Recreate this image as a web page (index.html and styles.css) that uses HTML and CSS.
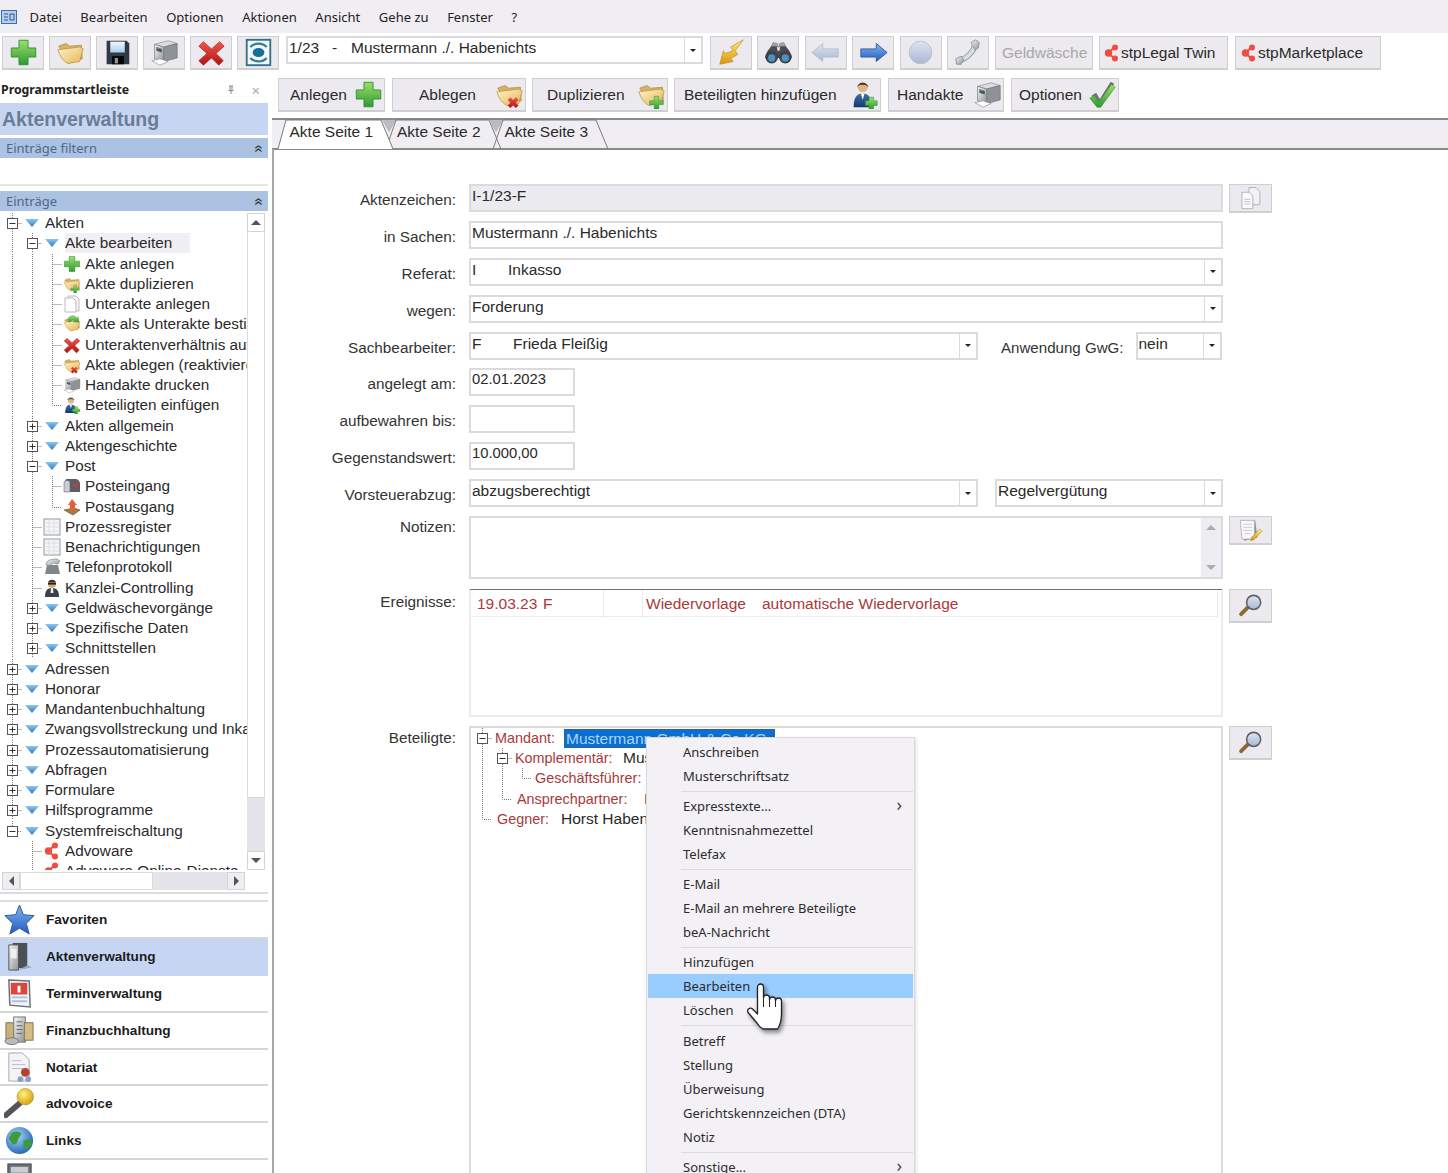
FILE: index.html
```html
<!DOCTYPE html>
<html lang="de">
<head>
<meta charset="utf-8">
<title>Aktenverwaltung</title>
<link rel="stylesheet" href="styles.css">
</head>
<body>
<svg class="defs" aria-hidden="true">
<defs>
<linearGradient id="gGreen" x1="0" y1="0" x2="0" y2="1"><stop offset="0" stop-color="#9be06a"/><stop offset="1" stop-color="#2f9a32"/></linearGradient>
<linearGradient id="gFolder" x1="0" y1="0" x2="1" y2="1"><stop offset="0" stop-color="#fff3c8"/><stop offset="1" stop-color="#e6b558"/></linearGradient>
<linearGradient id="gRed" x1="0" y1="0" x2="0" y2="1"><stop offset="0" stop-color="#f2554a"/><stop offset="1" stop-color="#b01414"/></linearGradient>
<linearGradient id="gBlue" x1="0" y1="0" x2="0" y2="1"><stop offset="0" stop-color="#7fb6f2"/><stop offset="1" stop-color="#2559c0"/></linearGradient>
<linearGradient id="gPale" x1="0" y1="0" x2="0" y2="1"><stop offset="0" stop-color="#dfe5f0"/><stop offset="1" stop-color="#a9b7d2"/></linearGradient>
<linearGradient id="gGrey" x1="0" y1="0" x2="1" y2="1"><stop offset="0" stop-color="#f5f5f5"/><stop offset="1" stop-color="#8f9296"/></linearGradient>
<linearGradient id="gGold" x1="0" y1="0" x2="0" y2="1"><stop offset="0" stop-color="#fff06a"/><stop offset="1" stop-color="#dc9212"/></linearGradient>
<linearGradient id="gTri" x1="0" y1="0" x2="0" y2="1"><stop offset="0" stop-color="#8fc6ee"/><stop offset="1" stop-color="#2b7bc6"/></linearGradient>
<linearGradient id="gSuit" x1="0" y1="0" x2="0" y2="1"><stop offset="0" stop-color="#3f6fa8"/><stop offset="1" stop-color="#123a70"/></linearGradient>
<linearGradient id="gWin" x1="0" y1="0" x2="0" y2="1"><stop offset="0" stop-color="#f0f8ff"/><stop offset="1" stop-color="#a8cdea"/></linearGradient>
<radialGradient id="gGlobe" cx=".4" cy=".35" r=".7"><stop offset="0" stop-color="#a6d8f8"/><stop offset="1" stop-color="#1f62b0"/></radialGradient>
<radialGradient id="gMic" cx=".4" cy=".35" r=".7"><stop offset="0" stop-color="#fff27a"/><stop offset="1" stop-color="#d49a10"/></radialGradient>

<symbol id="plus" viewBox="0 0 32 32"><path d="M11 2.500h10v8.500h8.500v10H21v8.500H11V21H2.500V11H11z" fill="url(#gGreen)" stroke="#2f8f34"/></symbol>
<symbol id="folder" viewBox="0 0 32 32"><path d="M3 9l8-3 4 3 13-1 1 15-15 5z" fill="#d9b062" stroke="#a98a48" stroke-width=".8"/><path d="M2 13l24-3 4 2-4 14-13 2q-7-3-11-15z" fill="url(#gFolder)" stroke="#b8923e" stroke-width=".8"/></symbol>
<symbol id="folderx" viewBox="0 0 32 32"><use href="#folder"/><path d="M17 19l3 3 3-3 3 3-3 3 3 3-3 3-3-3-3 3-3-3 3-3-3-3z" fill="url(#gRed)"/></symbol>
<symbol id="folderp" viewBox="0 0 32 32"><use href="#folder"/><path d="M19 18h5v5h5v4h-5v5h-5v-5h-5v-4h5z" fill="url(#gGreen)" stroke="#2f8f34" stroke-width=".6"/></symbol>
<symbol id="folderg" viewBox="0 0 32 32"><use href="#folder"/><path d="M10 12a8 7 0 0 1 14-7l3-2 1 10-10-1 3-2a4 4 0 0 0-7 2z" fill="url(#gGreen)" stroke="#2f8f34" stroke-width=".6"/></symbol>
<symbol id="save" viewBox="0 0 32 32"><path d="M4 3h22l3 3v23H4z" fill="#2e3a46"/><rect x="8" y="4" width="16" height="12" fill="url(#gWin)"/><rect x="10" y="20" width="13" height="9" fill="#050505"/><rect x="13" y="22" width="3.500" height="6" fill="#8a98a6"/></symbol>
<symbol id="print" viewBox="0 0 32 32"><path d="M5 7l15-4 10 3-15 4z" fill="#dadcde" stroke="#84888c" stroke-width=".7"/><path d="M15 10l15-4v16l-15 4z" fill="#8f9398" stroke="#6b6f74" stroke-width=".7"/><path d="M5 7l10 3v16L5 23z" fill="url(#gGrey)" stroke="#6b6f74" stroke-width=".7"/><path d="M7 10l6 2v4l-6-2z" fill="#4f555a"/><path d="M8 11l2 .7" stroke="#6ec26e" stroke-width="1.200"/><path d="M2 25l9-2 9 3-9 4z" fill="#fff" stroke="#888" stroke-width=".7"/></symbol>
<symbol id="xx" viewBox="0 0 32 32"><path d="M7 4l9 8 9-8 5 5-9 8 8 8-5 5-8-8-9 8-5-5 9-8-9-8z" fill="url(#gRed)" stroke="#a02020" stroke-width=".7" stroke-linejoin="round"/></symbol>
<symbol id="logo" viewBox="0 0 32 32"><rect x="3" y="2" width="26" height="28" fill="#f4f7f8" stroke="#2f6f88" stroke-width="2"/><ellipse cx="16" cy="16" rx="6.500" ry="5" fill="#13709a"/><path d="M7 10a11 9 0 0 1 18 0" fill="none" stroke="#2f7f9c" stroke-width="2.500"/><path d="M7 22a11 9 0 0 0 18 0" fill="none" stroke="#2f7f9c" stroke-width="2.500"/></symbol>
<symbol id="flash" viewBox="0 0 32 32"><path d="M29 2L15 10l3 4-9 3-2-3-4 15 15-3-3-3 8-5-3-4z" fill="url(#gGold)" stroke="#b88a20" stroke-width=".7"/></symbol>
<symbol id="bino" viewBox="0 0 32 32"><path d="M8 9l2-4 5 1v4h2V6l5-1 2 4z" fill="#a6a8aa" stroke="#666" stroke-width=".5"/><path d="M4 14l4-5h6l1 5h2l1-5h6l4 5 3 8H1z" fill="#4a4d52"/><circle cx="8.500" cy="21" r="7" fill="#3f4348"/><circle cx="23.500" cy="21" r="7" fill="#3f4348"/><circle cx="8.500" cy="22" r="4" fill="#4b93c6"/><circle cx="23.500" cy="22" r="4" fill="#4b93c6"/></symbol>
<symbol id="al" viewBox="0 0 32 32"><path d="M1 16L13 6v6h17v9H13v5z" fill="url(#gPale)" stroke="#b4bfd0"/></symbol>
<symbol id="ar" viewBox="0 0 32 32"><path d="M31 16L19 6v6H2v9h17v5z" fill="url(#gBlue)" stroke="#3a5d98"/></symbol>
<symbol id="circ" viewBox="0 0 32 32"><circle cx="16" cy="16" r="12.500" fill="url(#gPale)" stroke="#b6bfd0"/></symbol>
<symbol id="phone" viewBox="0 0 32 32"><path d="M24 8C23 15 15 23 7 25" fill="none" stroke="#8d969e" stroke-width="6"/><path d="M24 8C23 15 15 23 7 25" fill="none" stroke="#d8dfe4" stroke-width="4"/><path d="M20 5l5-3 4 3-1 6-4 2z" fill="url(#gGrey)" stroke="#8d969e"/><path d="M3 23l6-3 3 4-3 5-5 0z" fill="url(#gGrey)" stroke="#8d969e"/></symbol>
<symbol id="stp" viewBox="0 0 16 18"><path d="M4 9L11 3M4 9l7 6" stroke="#ee4e42" stroke-width="2"/><circle cx="4.500" cy="9" r="3.700" fill="#ee4e42"/><circle cx="11" cy="3.500" r="3" fill="#ee4e42"/><circle cx="11" cy="14.500" r="3" fill="#ee4e42"/></symbol>
<symbol id="person" viewBox="0 0 32 32"><circle cx="14" cy="8" r="5.500" fill="#e0b48a"/><path d="M8.500 7a6 6 0 0 1 11 0l-2-2h-7z" fill="#4a3a2a" stroke="#4a3a2a"/><path d="M4 30c0-10 3-15 10-15s10 5 10 15z" fill="url(#gSuit)"/><path d="M12 15h4l-2 7z" fill="#fff"/></symbol>
<symbol id="personp" viewBox="0 0 32 32"><use href="#person"/><path d="M21 19h5v4h4v5h-4v4h-5v-4h-4v-5h4z" fill="url(#gGreen)" stroke="#2f8f34" stroke-width=".6"/></symbol>
<symbol id="check" viewBox="0 0 32 32"><path d="M4 17l5-3 4 7L25 2l4 2-15 24h-4z" fill="#6d7478"/><path d="M2 20l5-3 5 7L26 5l4 3-16 22h-4z" fill="url(#gGreen)" stroke="#2f8f34" stroke-width=".6"/></symbol>
<symbol id="copy" viewBox="0 0 32 32"><path d="M14 2h9l5 5v17H14z" fill="#f2f2f4" stroke="#9fa3a8"/><path d="M5 8h9l5 5v16H5z" fill="#fbfbfc" stroke="#9fa3a8"/><path d="M8 17h8M8 20h8M8 23h8" stroke="#b4b8bc"/></symbol>
<symbol id="note" viewBox="0 0 32 32"><path d="M4 5l18-2 3 22-17 4z" fill="#8a929a"/><path d="M3 3h18v24H5z" fill="#f7f7f9" stroke="#a6abb0"/><path d="M7 8h11M7 12h11M7 16h11M8 20h8" stroke="#d6b8c0"/><path d="M28 14l3 3-11 11-4 1 1-4z" fill="url(#gGold)" stroke="#a98a28" stroke-width=".6"/></symbol>
<symbol id="lens" viewBox="0 0 32 32"><path d="M13 18L4 27" stroke="#8a6a30" stroke-width="5" stroke-linecap="round"/><circle cx="20" cy="12" r="9" fill="url(#gPale)" stroke="#5b6268" stroke-width="2"/></symbol>
<symbol id="tri" viewBox="0 0 20 18"><path d="M3 5h14L10 13z" fill="url(#gTri)"/></symbol>
<symbol id="doc" viewBox="0 0 18 18"><path d="M5 1h8l3 3v12H5z" fill="#f7f7f9" stroke="#bbb"/><path d="M2 3h8l3 3v11H2z" fill="#fff" stroke="#bbb"/></symbol>
<symbol id="mail" viewBox="0 0 18 18"><path d="M4 2h8c3 0 5 2 5 5v8H2V5c0-2 1-3 2-3z" fill="#5b6068"/><path d="M1 5c0-2 6-2 6 0v10H1z" fill="#c9ced4" stroke="#555" stroke-width=".5"/><path d="M8 9l7-3v4z" fill="#d83a30"/></symbol>
<symbol id="outb" viewBox="0 0 18 18"><path d="M1 12l10-2 6 2-7 5z" fill="#a87a48" stroke="#6a4a28" stroke-width=".6"/><path d="M9 1l5 6-2 0 0 5-5 0 0-5-2 0z" fill="#e2603a"/></symbol>
<symbol id="grid" viewBox="0 0 18 18"><rect x="1" y="1" width="16" height="16" fill="#f3f4f8" stroke="#a4a8ae" stroke-width="1.200"/><path d="M1 5h16M1 9h16M1 13h16M6 1v16M11 1v16" stroke="#d6d9e2" stroke-width=".7"/></symbol>
<symbol id="tel" viewBox="0 0 18 18"><path d="M2 16l2-9h11l2 9z" fill="#7f878c"/><path d="M3 7c0-4 3-6 11-6l3 2-2 3-5-1-3 3z" fill="url(#gGrey)" stroke="#666" stroke-width=".5"/></symbol>
<symbol id="boss" viewBox="0 0 18 18"><circle cx="9" cy="5" r="4" fill="#d8a878"/><path d="M5 3.500a4.200 4 0 0 1 8 0z" fill="#3a3026"/><rect x="5" y="4" width="8" height="1.600" fill="#222"/><path d="M2 18c0-6 2-9 7-9s7 3 7 9z" fill="#3c4046"/><path d="M8 9h2l.5 5h-3z" fill="#e8e8e8"/></symbol>
<symbol id="tg" viewBox="0 0 20 20.25"><path d="M10.500 0v20.250" class="dots"/></symbol>
<symbol id="te" viewBox="0 0 20 20.25"><path d="M10.500 0v20.250M10.500 10.500H20" class="dots"/></symbol>
<symbol id="tl" viewBox="0 0 20 20.25"><path d="M10.500 0v10.500H20" class="dots"/></symbol>
<symbol id="tp" viewBox="0 0 20 20.25"><path d="M10.500 0v20.250M10.500 10.500H20" class="dots"/><rect x="5.500" y="5.500" width="10" height="10" fill="#fff" stroke="#555"/><path d="M7.500 10.500h6M10.500 7.500v6" stroke="#333"/></symbol>
<symbol id="tm" viewBox="0 0 20 20.25"><path d="M10.500 0v20.250M10.500 10.500H20" class="dots"/><rect x="5.500" y="5.500" width="10" height="10" fill="#fff" stroke="#555"/><path d="M7.500 10.500h6" stroke="#333"/></symbol>
<symbol id="tz" viewBox="0 0 20 20.25"><path d="M10.500 0v10.500H20" class="dots"/><rect x="5.500" y="5.500" width="10" height="10" fill="#fff" stroke="#555"/><path d="M7.500 10.500h6" stroke="#333"/></symbol>
<symbol id="star" viewBox="0 0 32 32"><path d="M16 1l4 10 11 1-8 8 3 11-10-6-10 6 3-11-8-8 11-1z" fill="url(#gBlue)" stroke="#2a5c96"/></symbol>
<symbol id="binder" viewBox="0 0 32 32"><path d="M9 2h15v26H9z" fill="#4a5058"/><path d="M5 4h10v26H5z" fill="url(#gGrey)" stroke="#555"/><rect x="7" y="8" width="6" height="10" fill="#f0f0f0"/><path d="M15 30l14-3-5-2z" fill="#9aa4b4"/></symbol>
<symbol id="cal" viewBox="0 0 32 32"><path d="M5 2l21 1 1 27-21-2z" fill="#f4f4f6" stroke="#6d7076" stroke-width="1.500"/><rect x="7" y="5" width="17" height="12" fill="#d9483e"/><path d="M14 8h3v7h-3z" fill="#fff"/><path d="M8 20h16M8 24h16" stroke="#a8c0e4" stroke-width="2"/></symbol>
<symbol id="bldg" viewBox="0 0 32 32"><rect x="2" y="8" width="9" height="18" fill="#c9b27a" stroke="#85744a"/><rect x="10" y="2" width="12" height="26" fill="url(#gGrey)" stroke="#777"/><rect x="21" y="8" width="9" height="18" fill="#d3bd84" stroke="#85744a"/><path d="M13 7h6M13 11h6M13 15h6M13 19h6" stroke="#666"/><ellipse cx="8" cy="27" rx="7" ry="3.500" fill="#bbb" stroke="#777"/></symbol>
<symbol id="seal" viewBox="0 0 32 32"><path d="M5 1h14l7 7v22H5z" fill="#f4f4f6" stroke="#a4a8ae"/><path d="M8 9h10M8 13h14M8 17h12" stroke="#b8bcc2"/><circle cx="22" cy="21" r="4.500" fill="#b8402e"/><circle cx="17" cy="28" r="3" fill="#8aa0c8"/><circle cx="25" cy="28" r="3" fill="#8aa0c8"/></symbol>
<symbol id="mic" viewBox="0 0 32 32"><path d="M16 16L2 28" stroke="#52565c" stroke-width="6" stroke-linecap="round"/><circle cx="22" cy="9" r="8.500" fill="url(#gMic)" stroke="#b08a18" stroke-width=".6"/></symbol>
<symbol id="globe" viewBox="0 0 32 32"><circle cx="16" cy="16" r="14" fill="url(#gGlobe)"/><path d="M8 8c4-2 8-2 10 1l-3 5-2 5-4 1-4-6zM20 16l7-2 2 6-6 6-3-4z" fill="#3f9a3e"/></symbol>
<symbol id="tool" viewBox="0 0 32 32"><rect x="4" y="2" width="24" height="26" fill="#6d7076" stroke="#444"/><rect x="7" y="5" width="18" height="6" fill="#c9ced4"/></symbol>
</defs>
</svg>

<div class="menubar">
  <svg class="appicon" viewBox="0 0 16 16"><rect x=".5" y="1.500" width="15" height="13" fill="#b8cdea" stroke="#3a6fb4"/><path d="M3 5h4M3 8h4M3 11h4M9 5h4v6H9z" stroke="#2a5a9a" fill="none"/></svg>
  <span>Datei</span><span>Bearbeiten</span><span>Optionen</span><span>Aktionen</span><span>Ansicht</span><span>Gehe zu</span><span>Fenster</span><span>?</span>
</div>

<div class="toolbar">
  <div class="tgroup">
    <button class="tb"><svg><use href="#plus"/></svg></button>
    <button class="tb"><svg><use href="#folder"/></svg></button>
    <button class="tb"><svg><use href="#save"/></svg></button>
    <button class="tb"><svg><use href="#print"/></svg></button>
    <button class="tb"><svg><use href="#xx"/></svg></button>
    <button class="tb"><svg><use href="#logo"/></svg></button>
  </div>
  <div class="f combo topcombo"><span class="v"><span class="aznr">1/23&nbsp;&nbsp; -</span>Mustermann ./. Habenichts</span><span class="arr"></span></div>
  <div class="tgroup two">
    <button class="tb"><svg><use href="#flash"/></svg></button>
    <button class="tb"><svg><use href="#bino"/></svg></button>
    <button class="tb"><svg><use href="#al"/></svg></button>
    <button class="tb"><svg><use href="#ar"/></svg></button>
    <button class="tb"><svg><use href="#circ"/></svg></button>
    <button class="tb"><svg><use href="#phone"/></svg></button>
  </div>
  <button class="tb tx geld">Geldwäsche</button>
  <button class="tb tx twin"><svg class="s"><use href="#stp"/></svg>stpLegal Twin</button>
  <button class="tb tx market"><svg class="s"><use href="#stp"/></svg>stpMarketplace</button>
</div>

<div class="workspace">
  <aside class="sidebar">
    <div class="sb-head"><b>Programmstartleiste</b><svg class="pin" viewBox="0 0 10 10"><path d="M3 1h4M4 1v4M6 1v4M2.500 5.500h5M5 6v3" stroke="#888" fill="none"/></svg><span class="close">×</span></div>
    <div class="sb-title">Aktenverwaltung</div>
    <div class="sb-sec">Einträge filtern<span class="chev">«</span></div>
    <div class="sb-input"></div>
    <div class="sb-sec sec2">Einträge<span class="chev">«</span></div>
    <div class="treewrap">
      <div class="tree">
        <div class="tr"><svg class="t"><use href="#tm"/></svg><svg class="i"><use href="#tri"/></svg><span>Akten</span></div>
        <div class="tr"><svg class="t"><use href="#tg"/></svg><svg class="t"><use href="#tm"/></svg><svg class="i"><use href="#tri"/></svg><span class="hl">Akte bearbeiten</span></div>
        <div class="tr"><svg class="t"><use href="#tg"/></svg><svg class="t"><use href="#tg"/></svg><svg class="t"><use href="#te"/></svg><svg class="i"><use href="#plus"/></svg><span>Akte anlegen</span></div>
        <div class="tr"><svg class="t"><use href="#tg"/></svg><svg class="t"><use href="#tg"/></svg><svg class="t"><use href="#te"/></svg><svg class="i"><use href="#folderp"/></svg><span>Akte duplizieren</span></div>
        <div class="tr"><svg class="t"><use href="#tg"/></svg><svg class="t"><use href="#tg"/></svg><svg class="t"><use href="#te"/></svg><svg class="i"><use href="#doc"/></svg><span>Unterakte anlegen</span></div>
        <div class="tr"><svg class="t"><use href="#tg"/></svg><svg class="t"><use href="#tg"/></svg><svg class="t"><use href="#te"/></svg><svg class="i"><use href="#folderg"/></svg><span>Akte als Unterakte bestimmen</span></div>
        <div class="tr"><svg class="t"><use href="#tg"/></svg><svg class="t"><use href="#tg"/></svg><svg class="t"><use href="#te"/></svg><svg class="i"><use href="#xx"/></svg><span>Unteraktenverhältnis aufheben</span></div>
        <div class="tr"><svg class="t"><use href="#tg"/></svg><svg class="t"><use href="#tg"/></svg><svg class="t"><use href="#te"/></svg><svg class="i"><use href="#folderx"/></svg><span>Akte ablegen (reaktivieren)</span></div>
        <div class="tr"><svg class="t"><use href="#tg"/></svg><svg class="t"><use href="#tg"/></svg><svg class="t"><use href="#te"/></svg><svg class="i"><use href="#print"/></svg><span>Handakte drucken</span></div>
        <div class="tr"><svg class="t"><use href="#tg"/></svg><svg class="t"><use href="#tg"/></svg><svg class="t"><use href="#tl"/></svg><svg class="i"><use href="#personp"/></svg><span>Beteiligten einfügen</span></div>
        <div class="tr"><svg class="t"><use href="#tg"/></svg><svg class="t"><use href="#tp"/></svg><svg class="i"><use href="#tri"/></svg><span>Akten allgemein</span></div>
        <div class="tr"><svg class="t"><use href="#tg"/></svg><svg class="t"><use href="#tp"/></svg><svg class="i"><use href="#tri"/></svg><span>Aktengeschichte</span></div>
        <div class="tr"><svg class="t"><use href="#tg"/></svg><svg class="t"><use href="#tm"/></svg><svg class="i"><use href="#tri"/></svg><span>Post</span></div>
        <div class="tr"><svg class="t"><use href="#tg"/></svg><svg class="t"><use href="#tg"/></svg><svg class="t"><use href="#te"/></svg><svg class="i"><use href="#mail"/></svg><span>Posteingang</span></div>
        <div class="tr"><svg class="t"><use href="#tg"/></svg><svg class="t"><use href="#tg"/></svg><svg class="t"><use href="#tl"/></svg><svg class="i"><use href="#outb"/></svg><span>Postausgang</span></div>
        <div class="tr"><svg class="t"><use href="#tg"/></svg><svg class="t"><use href="#te"/></svg><svg class="i"><use href="#grid"/></svg><span>Prozessregister</span></div>
        <div class="tr"><svg class="t"><use href="#tg"/></svg><svg class="t"><use href="#te"/></svg><svg class="i"><use href="#grid"/></svg><span>Benachrichtigungen</span></div>
        <div class="tr"><svg class="t"><use href="#tg"/></svg><svg class="t"><use href="#te"/></svg><svg class="i"><use href="#tel"/></svg><span>Telefonprotokoll</span></div>
        <div class="tr"><svg class="t"><use href="#tg"/></svg><svg class="t"><use href="#te"/></svg><svg class="i"><use href="#boss"/></svg><span>Kanzlei-Controlling</span></div>
        <div class="tr"><svg class="t"><use href="#tg"/></svg><svg class="t"><use href="#tp"/></svg><svg class="i"><use href="#tri"/></svg><span>Geldwäschevorgänge</span></div>
        <div class="tr"><svg class="t"><use href="#tg"/></svg><svg class="t"><use href="#tp"/></svg><svg class="i"><use href="#tri"/></svg><span>Spezifische Daten</span></div>
        <div class="tr"><svg class="t"><use href="#tg"/></svg><svg class="t"><use href="#tp"/></svg><svg class="i"><use href="#tri"/></svg><span>Schnittstellen</span></div>
        <div class="tr"><svg class="t"><use href="#tp"/></svg><svg class="i"><use href="#tri"/></svg><span>Adressen</span></div>
        <div class="tr"><svg class="t"><use href="#tp"/></svg><svg class="i"><use href="#tri"/></svg><span>Honorar</span></div>
        <div class="tr"><svg class="t"><use href="#tp"/></svg><svg class="i"><use href="#tri"/></svg><span>Mandantenbuchhaltung</span></div>
        <div class="tr"><svg class="t"><use href="#tp"/></svg><svg class="i"><use href="#tri"/></svg><span>Zwangsvollstreckung und Inkasso</span></div>
        <div class="tr"><svg class="t"><use href="#tp"/></svg><svg class="i"><use href="#tri"/></svg><span>Prozessautomatisierung</span></div>
        <div class="tr"><svg class="t"><use href="#tp"/></svg><svg class="i"><use href="#tri"/></svg><span>Abfragen</span></div>
        <div class="tr"><svg class="t"><use href="#tp"/></svg><svg class="i"><use href="#tri"/></svg><span>Formulare</span></div>
        <div class="tr"><svg class="t"><use href="#tp"/></svg><svg class="i"><use href="#tri"/></svg><span>Hilfsprogramme</span></div>
        <div class="tr"><svg class="t"><use href="#tz"/></svg><svg class="i"><use href="#tri"/></svg><span>Systemfreischaltung</span></div>
        <div class="tr"><i class="blank"></i><svg class="t"><use href="#te"/></svg><svg class="i"><use href="#stp"/></svg><span>Advoware</span></div>
        <div class="tr"><i class="blank"></i><svg class="t"><use href="#te"/></svg><svg class="i"><use href="#stp"/></svg><span>Advoware Online-Dienste</span></div>
      </div>
      <div class="vscroll">
        <span class="sbtn"><i class="up"></i></span>
        <span class="sthumb"></span>
        <span class="strack"></span>
        <span class="sbtn"><i class="down"></i></span>
      </div>
      <div class="hscroll">
        <span class="hbtn"><i class="left"></i></span>
        <span class="hthumb"></span>
        <span class="htrack"></span>
        <span class="hbtn"><i class="right"></i></span>
      </div>
    </div>
    <nav class="outlook">
      <div class="ol"><svg><use href="#star"/></svg><b>Favoriten</b></div>
      <div class="ol on"><svg><use href="#binder"/></svg><b>Aktenverwaltung</b></div>
      <div class="ol"><svg><use href="#cal"/></svg><b>Terminverwaltung</b></div>
      <div class="ol"><svg><use href="#bldg"/></svg><b>Finanzbuchhaltung</b></div>
      <div class="ol"><svg><use href="#seal"/></svg><b>Notariat</b></div>
      <div class="ol"><svg><use href="#mic"/></svg><b>advovoice</b></div>
      <div class="ol"><svg><use href="#globe"/></svg><b>Links</b></div>
      <div class="ol"><svg><use href="#tool"/></svg><b>Spezialmodule</b></div>
    </nav>
  </aside>

  <main class="main">
    <div class="actions">
      <button class="tb ac a1">Anlegen<svg><use href="#plus"/></svg></button>
      <button class="tb ac a2">Ablegen<svg><use href="#folderx"/></svg></button>
      <button class="tb ac a3">Duplizieren<svg><use href="#folderp"/></svg></button>
      <button class="tb ac a4">Beteiligten hinzufügen<svg><use href="#personp"/></svg></button>
      <button class="tb ac a5">Handakte<svg><use href="#print"/></svg></button>
      <button class="tb ac a6">Optionen<svg><use href="#check"/></svg></button>
    </div>
    <div class="tabs">
      <span class="tab on"><svg class="shape" viewBox="0 0 115 30" preserveAspectRatio="none"><path d="M0 30L8 0H103L115 30"/></svg><span class="tl">Akte Seite 1</span></span>
      <span class="tab"><svg class="shape" viewBox="0 0 115 30" preserveAspectRatio="none"><path class="gap" d="M-4 0H10L3 13z"/><path d="M0 30L10 0H103L115 30"/></svg><span class="tl">Akte Seite 2</span></span>
      <span class="tab"><svg class="shape" viewBox="0 0 115 30" preserveAspectRatio="none"><path class="gap" d="M-4 0H10L3 13z"/><path d="M0 30L10 0H103L115 30"/></svg><span class="tl">Akte Seite 3</span></span>
    </div>
    <div class="form">
      <div class="row"><label>Aktenzeichen:</label><div class="f full ro"><span class="v">I-1/23-F</span></div><button class="tb side"><svg><use href="#copy"/></svg></button></div>
      <div class="row"><label>in Sachen:</label><div class="f full"><span class="v">Mustermann ./. Habenichts</span></div></div>
      <div class="row"><label>Referat:</label><div class="f combo full"><span class="v"><span class="k1">I</span>Inkasso</span><span class="arr"></span></div></div>
      <div class="row"><label>wegen:</label><div class="f combo full"><span class="v">Forderung</span><span class="arr"></span></div></div>
      <div class="row"><label>Sachbearbeiter:</label><div class="f combo mid"><span class="v"><span class="k2">F</span>Frieda Fleißig</span><span class="arr"></span></div><label class="inl">Anwendung GwG:</label><div class="f combo nein"><span class="v">nein</span><span class="arr"></span></div></div>
      <div class="row"><label>angelegt am:</label><div class="f date"><span class="v">02.01.2023</span></div></div>
      <div class="row"><label>aufbewahren bis:</label><div class="f date"></div></div>
      <div class="row"><label>Gegenstandswert:</label><div class="f date"><span class="v">10.000,00</span></div></div>
      <div class="row"><label>Vorsteuerabzug:</label><div class="f combo mid"><span class="v">abzugsberechtigt</span><span class="arr"></span></div><div class="f combo regel"><span class="v">Regelvergütung</span><span class="arr"></span></div></div>
      <div class="row notes"><label>Notizen:</label><div class="f full notebox"><div class="nscroll"><i class="up"></i><i class="down"></i></div></div><button class="tb side"><svg><use href="#note"/></svg></button></div>
      <div class="row events"><label>Ereignisse:</label>
        <div class="full evbox">
          <div class="evrow"><span>19.03.23</span><span>F</span><span class="c3"></span><span class="c4">Wiedervorlage</span><span>automatische Wiedervorlage</span></div>
        </div>
        <button class="tb side tall"><svg><use href="#lens"/></svg></button>
      </div>
      <div class="row parties"><label>Beteiligte:</label>
        <div class="f full ptree">
          <div class="pr"><svg class="t"><use href="#tm"/></svg><span class="pk w1">Mandant:</span><span class="sel">Mustermann GmbH &amp; Co.KG</span></div>
          <div class="pr"><svg class="t"><use href="#tg"/></svg><svg class="t"><use href="#tm"/></svg><span class="pk w2">Komplementär:</span><span>Mustermann Verwaltungs GmbH</span></div>
          <div class="pr"><svg class="t"><use href="#tg"/></svg><svg class="t"><use href="#tg"/></svg><svg class="t"><use href="#tl"/></svg><span class="pk">Geschäftsführer:</span></div>
          <div class="pr"><svg class="t"><use href="#tg"/></svg><svg class="t"><use href="#tl"/></svg><span class="pk w3">Ansprechpartner:</span><span class="pk mark">I</span></div>
          <div class="pr"><svg class="t"><use href="#tl"/></svg><span class="pk w4">Gegner:</span><span>Horst Habenichts</span></div>
        </div>
        <button class="tb side tall"><svg><use href="#lens"/></svg></button>
      </div>
    </div>
  </main>
</div>

<div class="menu">
  <div class="mi">Anschreiben</div>
  <div class="mi">Musterschriftsatz</div>
  <div class="sep"></div>
  <div class="mi">Expresstexte...<span class="more">›</span></div>
  <div class="mi">Kenntnisnahmezettel</div>
  <div class="mi">Telefax</div>
  <div class="sep"></div>
  <div class="mi">E-Mail</div>
  <div class="mi">E-Mail an mehrere Beteiligte</div>
  <div class="mi">beA-Nachricht</div>
  <div class="sep"></div>
  <div class="mi">Hinzufügen</div>
  <div class="mi hot">Bearbeiten</div>
  <div class="mi">Löschen</div>
  <div class="sep wide"></div>
  <div class="mi">Betreff</div>
  <div class="mi">Stellung</div>
  <div class="mi">Überweisung</div>
  <div class="mi">Gerichtskennzeichen (DTA)</div>
  <div class="mi">Notiz</div>
  <div class="sep"></div>
  <div class="mi">Sonstige...<span class="more">›</span></div>
</div>

<svg class="hand" viewBox="0 0 38 49"><path d="M10.500 4a3 3 0 0 1 6 0V15a3 3 0 0 1 6 0V17a3 3 0 0 1 6 0v1a3 3 0 0 1 6 0v13q0 9-4 15H16q-4-2-6-6L1.500 30a2.800 2.800 0 0 1 4-4l5 5z" fill="#fff" stroke="#222" stroke-width="1.300" stroke-linejoin="round"/><path d="M16.500 15v9M22.500 17v7M28.500 18v6" stroke="#222" fill="none"/></svg>
</body>
</html>
```

FILE: styles.css
```css
* { box-sizing: border-box; }
html, body { margin: 0; padding: 0; }
body {
  width: 1448px; height: 1173px; overflow: hidden; background: #fff;
  display: flex; flex-direction: column;
  font-family: "Liberation Sans", Arial, sans-serif; font-size: 15.5px; color: #2a2a2a;
}
.defs { position: absolute; width: 0; height: 0; }
.dots { fill: none; stroke: #777; stroke-dasharray: 1 1; }

.menubar {
  height: 33px; background: #f0eef2; flex: none;
  display: flex; align-items: center; gap: 18.600px; padding-left: 1px;
  font-family: "Noto Sans", sans-serif; font-size: 13px; color: #222;
}
.appicon { width: 16px; height: 16px; margin-right: -6px; }

.toolbar { flex: none; height: 43px; padding: 3px 0 0 2px; display: flex; align-items: flex-start; }
.tgroup { display: flex; gap: 5px; }
.tgroup.two { gap: 5.400px; margin-left: 7px; }
.tb {
  height: 34px; width: 42px; padding: 0; margin: 0; flex: none;
  background: #eceaee; border: 1px solid #cfcfcf; border-bottom-width: 2px; border-radius: 0;
  display: flex; align-items: center; justify-content: center;
  font: inherit; color: #2a2a2a;
}
.tb svg { width: 29px; height: 29px; }
.tb svg.s { width: 16px; height: 18px; margin-right: 1px; }
.tx { justify-content: flex-start; padding-left: 3px; }
.geld { width: 98px; margin-left: 6px; color: #a8a8a8; padding-left: 6px; }
.twin { width: 129px; margin-left: 6px; padding-left: 4px; }
.market { width: 146px; margin-left: 7px; padding-left: 5px; }

.f { border: 2px solid #dbdbdd; background: #fff; display: flex; flex: none; overflow: hidden; }
.v { flex: 1; padding: 0 0 0 1px; line-height: 19px; white-space: nowrap; overflow: hidden; }
.combo .arr { flex: none; width: 17px; border-left: 1px solid #dcdcdc; display: flex; align-items: center; justify-content: center; }
.combo .arr::after { content: ""; border: 3px solid transparent; border-top: 3px solid #222; border-bottom: 0; }
.topcombo { width: 417px; height: 32px; margin-left: 7px; }
.aznr { display: inline-block; width: 62px; }

.workspace { flex: 1; min-height: 0; display: flex; overflow: hidden; }

.sidebar { width: 268px; flex: none; display: flex; flex-direction: column; }
.sb-head { height: 27px; flex: none; display: flex; align-items: center; padding-left: 1px; font-size: 13px; color: #222; font-family: "Noto Sans", sans-serif; }
.sb-head b { flex: 1; font-weight: 700; font-size: 12.300px; }
.pin { width: 10px; height: 10px; margin-right: 15px; }
.close { color: #aaa; font-size: 15px; margin-right: 8px; }
.sb-title { height: 32px; flex: none; background: #c6d6f2; color: #6b7c95; font-weight: 700; font-size: 19.500px; line-height: 32px; padding-left: 2px; margin-bottom: 3px; }
.sb-sec {
  height: 20px; flex: none; background: #abc2e2; color: #51688a; display: flex; justify-content: space-between; align-items: center;
  padding: 0 5px 0 6px; font-family: "Noto Sans", sans-serif; font-size: 13px;
}
.sec2 { margin-top: 5px; }
.chev { display: inline-block; transform: rotate(90deg); color: #333; font-size: 16px; line-height: 13px; }
.sb-input { height: 26px; margin-top: 2px; border-bottom: 2px solid #e6e6e8; flex: none; }
.treewrap {
  flex: none; height: 682px; margin-top: 1px; border-bottom: 2px solid #dcdcdc;
  display: grid; grid-template-columns: 247px 18px; grid-template-rows: 658px 20px;
}
.tree { overflow: hidden; padding: 1px 0 0 2px; white-space: nowrap; font-size: 15.300px; }
.tr { height: 20.250px; display: flex; align-items: center; }
.t { width: 20px; height: 20.250px; flex: none; display: block; }
.i { width: 20px; height: 18px; flex: none; margin: 0 3px 0 0; }
.blank { width: 20px; flex: none; }
.tr span { line-height: 20px; }
.hl { background: #f1eff3; padding-right: 18px; }

.vscroll { display: flex; flex-direction: column; background: #fff; margin-top: 1px; }
.sbtn { height: 19px; flex: none; border: 1px solid #d4d4d4; display: flex; align-items: center; justify-content: center; background: #fff; }
.sthumb { height: 566px; border: 1px solid #dcdcdc; border-top: 0; flex: none; }
.strack { flex: 1; background: #e5e4e8; }
.up { border: 5px solid transparent; border-bottom: 5px solid #555; border-top: 0; display: block; }
.down { border: 5px solid transparent; border-top: 5px solid #555; border-bottom: 0; display: block; }
.left { border: 5px solid transparent; border-right: 5px solid #555; border-left: 0; display: block; }
.right { border: 5px solid transparent; border-left: 5px solid #555; border-right: 0; display: block; }
.hscroll { display: flex; margin: 2px 2px 0 2px; grid-column: 1; background: #e5e4e8; height: 18px; }
.hbtn { width: 18px; flex: none; display: flex; align-items: center; justify-content: center; border: 1px solid #d4d4d4; background: #efeef2; }
.hthumb { width: 133px; background: #fff; border: 1px solid #dcdcdc; flex: none; }
.htrack { flex: 1; }

.outlook { flex: none; margin-top: 6px; border-top: 2px solid #dedede; }
.ol { height: 36.900px; border-bottom: 2px solid #d6d6d8; display: flex; align-items: center; padding-left: 4px; font-size: 13.600px; color: #1c1c1c; }
.ol svg { width: 31px; height: 31px; margin-right: 11px; flex: none; }
.ol.on { background: #c6d6f2; border-bottom-color: #c6d6f2; }

.main { flex: 1; min-width: 0; display: flex; flex-direction: column; margin-left: 4px; }
.actions { flex: none; height: 42px; padding: 2px 0 0 6px; display: flex; }
.ac { justify-content: space-between; padding: 0 1px 0 11px; height: 34px; margin-right: 7px; }
.a1 { width: 107px; }
.a2 { width: 134px; padding-left: 26px; margin-right: 6px; }
.a3 { width: 136px; padding-left: 14px; margin-right: 6px; }
.a4 { width: 207px; padding-left: 9px; }
.a5 { width: 116px; padding-left: 8px; }
.a6 { width: 108px; padding-left: 7px; margin: 0; }

.tabs {
  flex: none; height: 32px; background: #f0eef2; border-top: 2px solid #8a8a8c; border-bottom: 2px solid #8a8a8c;
  display: flex; padding-left: 6px; margin-bottom: -1px;
}
.tab { width: 107.500px; height: 30px; flex: none; display: block; position: relative; }
.shape { position: absolute; left: 0; top: 0; width: 115px; height: 29px; overflow: visible; fill: none; stroke: #777; }
.shape .gap { fill: #bcbcc0; stroke: none; }
.tab.on .shape { fill: #fff; }
.tab.on { z-index: 1; }
.tl { position: relative; display: block; padding-left: 11.500px; line-height: 24px; white-space: nowrap; }

.form { flex: 1; min-height: 0; border-left: 2px solid #a8a8aa; padding-top: 35px; display: flex; flex-direction: column; gap: 8.900px; }
.row { display: flex; height: 28px; flex: none; align-items: flex-start; }
.row label { width: 182px; flex: none; text-align: right; margin-right: 13px; padding-top: 6px; line-height: 19px; color: #333; font-size: 15.300px; }
.row label.inl { width: auto; margin: 0 12px 0 23px; font-size: 15.100px; }
.f { height: 28px; }
.full { width: 754px; flex: none; }
.ro { background: #ecebf0; }
.mid { width: 509px; }
.nein { width: 86px; }
.regel { width: 228px; margin-left: 17px; }
.date { width: 106px; font-size: 14.800px; }
.side { margin-left: 6px; width: 43px; height: 29px; }
.side svg { width: 25px; height: 25px; }
.side.tall { height: 34px; }
.k1 { display: inline-block; width: 36px; }
.k2 { display: inline-block; width: 41px; }

.notes { height: 63px; }
.notes label { padding-top: 1px; }
.notebox { height: 63px; justify-content: flex-end; }
.nscroll { width: 20px; background: #eeedf1; display: flex; flex-direction: column; justify-content: space-between; align-items: center; padding: 7px 0; }
.nscroll .up { border-bottom-color: #a9adb2; }
.nscroll .down { border-top-color: #a9adb2; }

.events { height: 128px; margin-top: 1px; }
.events label { padding-top: 3px; }
.evbox { height: 128px; border: 2px solid #ececee; border-top: 1px solid #707070; background: #fff; padding-right: 3px; }
.evrow { height: 27px; display: grid; grid-template-columns: 66px 60px 40px 119px 1fr; border-bottom: 1px solid #ececee; border-right: 1px solid #ececee; color: #a83a3a; line-height: 28px; padding-left: 6px; }
.evrow .c3 { border-left: 1px solid #ececee; border-right: 1px solid #ececee; }
.evrow .c4 { padding-left: 3px; }

.parties { height: 480px; }
.parties label { padding-top: 2px; }
.ptree { height: 480px; display: block; padding-left: 1px; }
.pr { height: 20.250px; display: flex; align-items: center; white-space: nowrap; line-height: 20px; }
.pk { color: #a83a3a; margin-left: 3px; font-size: 14.400px; flex: none; }
.w1 { width: 69px; }
.w2 { width: 108px; }
.w3 { width: 127px; }
.w4 { width: 64px; }
.pr .w3, .pr .w4 { margin-left: 5px; }
.pr .mark { margin-left: 0; }
.sel { background: #0a6ed2; color: #a8d4fb; padding: 0 2px; width: 211px; outline: 1px dotted #555; outline-offset: -1px; margin-top: 1px; height: 19px; line-height: 19px; overflow: hidden; flex: none; }

.menu {
  position: absolute; left: 646px; top: 737px; width: 269px; height: 450px; background: #f3f1f5;
  border: 1px solid #dadada; padding: 2px 1px 0; box-shadow: 1px 1px 3px rgba(0,0,0,.15);
  font-family: "Noto Sans", sans-serif; font-size: 13px; color: #2c2c2c;
}
.mi { height: 24px; line-height: 24px; padding: 0 11px 0 35px; display: flex; justify-content: space-between; }
.mi.hot { background: #99ccff; }
.more { font-size: 18px; line-height: 21px; color: #444; }
.sep { height: 6px; margin-left: 33px; display: flex; align-items: center; }
.sep::after { content: ""; flex: 1; height: 1px; background: #dcdadf; }
.sep.wide { height: 7px; }

.hand { position: absolute; left: 747px; top: 983px; width: 38px; height: 49px; filter: drop-shadow(2px 3px 2px rgba(0,0,0,.45)); }
```
